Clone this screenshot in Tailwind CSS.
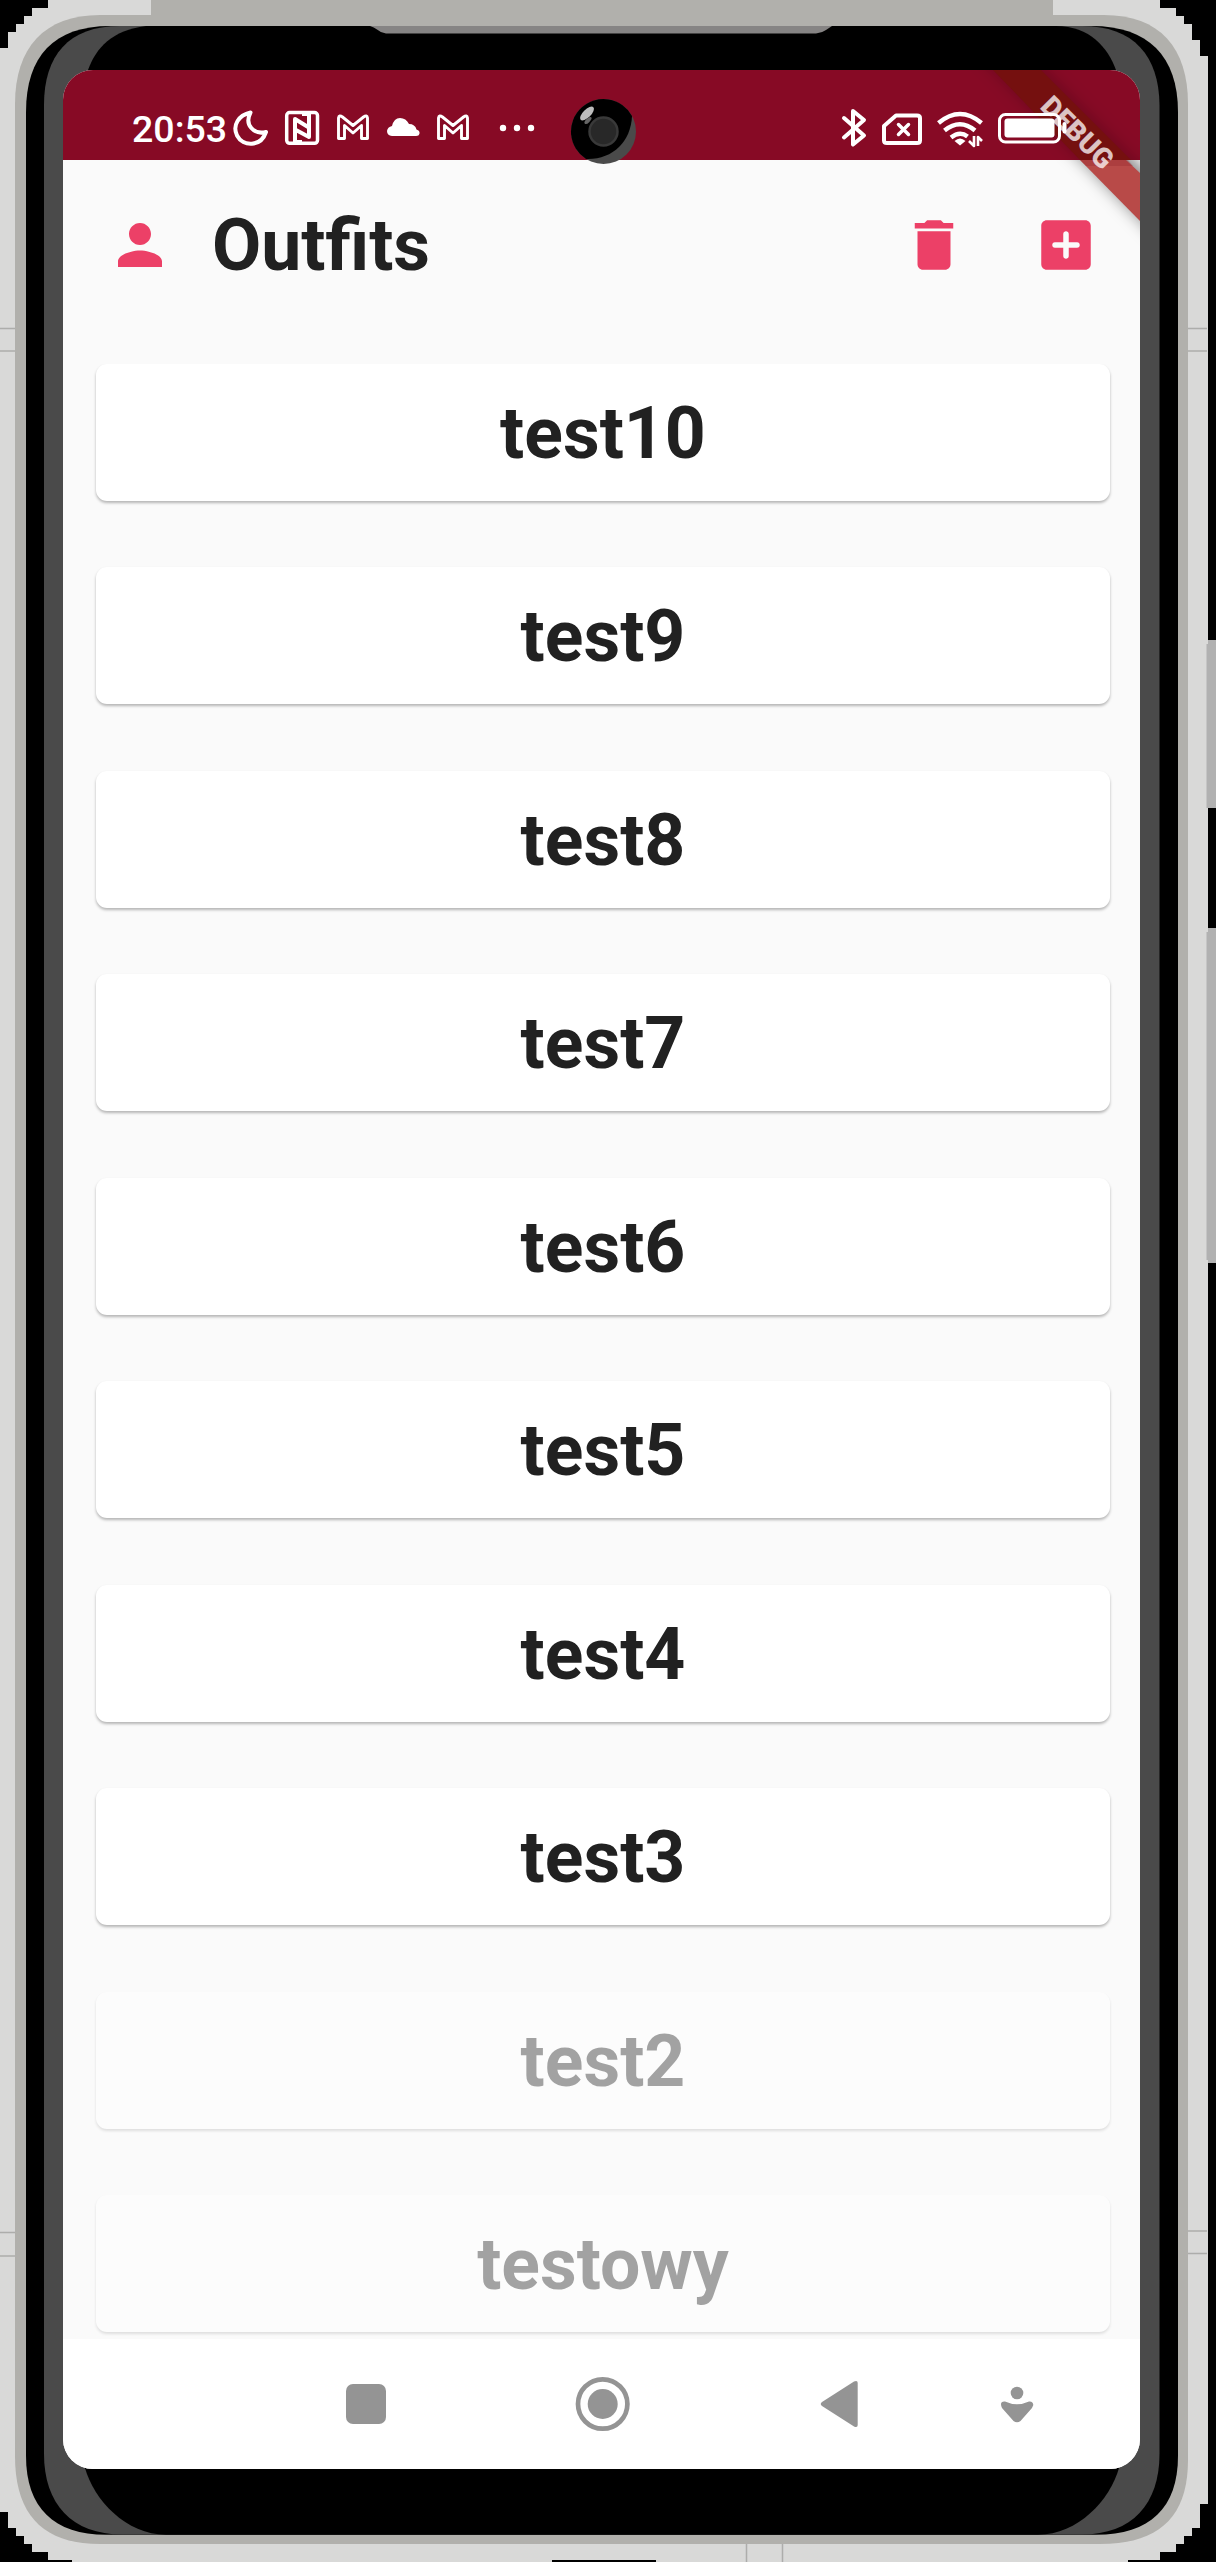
<!DOCTYPE html>
<html lang="en">
<head>
<meta charset="utf-8">
<title>Outfits</title>
<script src="https://cdn.jsdelivr.net/npm/@tailwindcss/browser@4"></script>
</head>
<body class="bg-black">
<div class="relative w-[1216px] h-[2562px] overflow-hidden bg-black pt-[70px] pl-[63px] font-['Roboto',sans-serif] text-[#212121]">
  <!-- phone body -->
  <svg class="absolute inset-0" width="1216" height="2562" viewBox="0 0 1216 2562">
    <path shape-rendering="crispEdges" fill="#d9d9d8" d="M48 0H1160V8H1176V16H1184V24H1192V40H1200V56H1208V2504H1200V2528H1192V2536H1184V2544H1176V2552H1160V2560H1128V2562H72V2560H48V2552H32V2544H24V2536H16V2528H8V2512H0V48H8V32H16V24H24V16H32V8H48Z"/>
    <path stroke="#adadab" stroke-width="1.5" d="M0 328.5H15M0 351H15M1188 328.5H1207M1188 351H1207M0 2232.5H15M0 2256H15M1188 2231H1207M1188 2253.5H1207M746.5 2544V2562M782.500 2544V2562"/>
    <path fill="#b1b0ac" d="M151 0H1053V26H151Z"/>
    <path fill="#b1b0ac" d="M100 15H1104C1160 15 1188 48 1188 104V2460C1188 2516 1160 2544 1100 2544H100C44 2544 15 2516 15 2456V104C15 48 44 15 100 15Z"/>
    <path fill="#000" d="M110 26H1092C1148 26 1178 56 1178 112V2456C1178 2508 1150 2534.700 1096 2534.700H106C54 2534.700 26 2508 26 2456V112C26 56 54 26 110 26Z"/>
    <path fill="#4a4a4a" d="M120 26H1082C1134 26 1159 56 1159.500 105V2454C1159.500 2504 1132 2534.500 1082 2534.500H122C72 2534.500 44 2504 44 2454V105C44 56 68 26 120 26Z"/>
    <path fill="#000" d="M146 26H1056C1090 26 1108 48 1116 70L1119 2468C1110 2500 1078 2534.700 1038 2534.700H166C126 2534.700 94 2500 85 2468L88 70C96 48 112 30 146 26Z"/>
    <path fill="#868484" d="M370 26H832L826 30Q822 33 816 33.500H386Q381 33 377 29.500Q374 27 370 26Z"/>
    <path fill="#b1b1b1" d="M1208 640H1216V808H1206.500V644H1208ZM1208 928H1216V1263H1208V1260H1206.500V932H1208Z"/>
    <path fill="#000" d="M552 2560H656V2562H552Z"/>
  </svg>

  <!-- screen -->
  <main class="relative flex h-[2399px] w-[1077px] flex-col overflow-hidden rounded-[30px] bg-[#fafafa]">
    <header class="flex h-[90px] shrink-0 items-start bg-[#870a25] pl-[69px] text-white">
      <span class="mt-[36px] w-[94px] text-[37.500px] leading-[46px] font-medium">20:53</span>
      <svg class="mt-[36px] shrink-0" width="330" height="48" viewBox="226 106 330 48" fill="none" stroke="#fff" stroke-width="3.500" stroke-linejoin="round" stroke-linecap="round">
        <path stroke-width="4" d="M250.500 112.500C239 115 232 125 237 135.500C243 147 261 147 266 132C254 135 244 125 250.500 112.500Z"/>
        <rect x="286.700" y="112.500" width="30.800" height="30.800" rx="3"/>
        <path stroke-width="4" stroke-linecap="butt" d="M295 143V119L308 127M309 113V137L296 130M302 114H309M295 142H302"/>
        <path stroke-width="2.900" d="M338.500 138.500V118Q339 114.500 342.500 117L353 125.500L363.500 117Q367 114.500 367.500 118V138.500H361.500V125.500L353 133L344.500 125.500V138.500Z"/>
        <path fill="#fff" stroke="none" d="M392 136Q387 135.500 387 131Q387.500 127 392 126Q394 118 400 118Q406 118 409 124Q415 124 416.500 129.500Q420 130.500 419.500 133.500Q419 136 416 136Z"/>
        <path stroke-width="2.900" d="M438.500 138.500V118Q439 114.500 442.500 117L453 125.500L463.500 117Q467 114.500 467.500 118V138.500H461.500V125.500L453 133L444.500 125.500V138.500Z"/>
        <g fill="#fff" stroke="none"><circle cx="503" cy="128" r="3.200"/><circle cx="517" cy="128" r="3.200"/><circle cx="531" cy="128" r="3.200"/></g>
      </svg>
      <svg class="relative z-20 mt-[36px] ml-[280px] shrink-0" width="236" height="48" viewBox="836 106 236 48" fill="none" stroke="#fff" stroke-width="4" stroke-linejoin="round" stroke-linecap="round">
        <path d="M844 118L864 135.500L853 144.500V111L864 120L844 137.500"/>
        <path d="M896 115.500H917Q920 115.500 920 118V140.500Q920 143 917 143H887Q884 143 884 140.500V126Z"/>
        <path stroke-width="3.500" d="M898.500 124.500L908.500 134.500M908.500 124.500L898.500 134.500"/>
        <g stroke-linecap="butt" stroke-width="4.500"><path d="M938.500 123Q960 105 981.500 123M944.500 130.500Q960 118 975 130.500M951 137.500Q960 130.500 967.500 136.500"/></g>
        <path fill="#fff" stroke="none" d="M954.500 141Q960 136 965.500 141L960 145.500Z"/>
        <path stroke-width="2.600" stroke-linecap="butt" d="M974 136V146L969 141M978 146V137L982 141"/>
        <rect x="999.500" y="114.500" width="60" height="27.500" rx="6" stroke-width="3"/>
        <rect x="1004.500" y="118.500" width="50" height="19" rx="3" fill="#fff" stroke="none"/>
        <path d="M1064.500 124V131.500"/>
      </svg>
    </header>

    <div class="flex h-[204px] shrink-0 items-start pt-[42px] pl-[44px]">
      <svg class="mt-[10px] shrink-0" width="66" height="66" viewBox="0 0 24 24" fill="#ec4067"><path d="M12 12c2.210 0 4-1.790 4-4s-1.790-4-4-4-4 1.790-4 4 1.790 4 4 4zm0 2c-2.670 0-8 1.340-8 4v2h16v-2c0-2.660-5.330-4-8-4z"/></svg>
      <h1 class="mt-px ml-[39px] w-[620px] text-[71.500px] leading-[86px] font-bold">Outfits</h1>
      <svg class="mt-[10px] ml-[69px] shrink-0" width="66" height="66" viewBox="0 0 24 24" fill="#ec4067"><path d="M6 19c0 1.100.9 2 2 2h8c1.100 0 2-.9 2-2V7H6v12zM19 4h-3.500l-1-1h-5l-1 1H5v2h14V4z"/></svg>
      <svg class="mt-[10px] ml-[66px] shrink-0" width="66" height="66" viewBox="0 0 24 24" fill="#ec4067"><path d="M19 3H5c-1.100 0-2 .9-2 2v14c0 1.100.9 2 2 2h14c1.100 0 2-.9 2-2V5c0-1.100-.9-2-2-2zm-3 10h-3v3c0 1.330-2 1.330-2 0v-3H8c-1.330 0-1.330-2 0-2h3V8c0-1.330 2-1.330 2 0v3h3c1.330 0 1.330 2 0 2z"/></svg>
    </div>

    <ul class="flex h-[1975px] shrink-0 flex-col gap-[66.440px] overflow-hidden pr-[30px] pl-[33px] text-center text-[71.500px] leading-[139px] font-bold">
      <li class="h-[137px] shrink-0 rounded-[11px] bg-white shadow-[0_2px_3px_rgba(0,0,0,0.28)]">test10</li>
      <li class="h-[137px] shrink-0 rounded-[11px] bg-white shadow-[0_2px_3px_rgba(0,0,0,0.28)]">test9</li>
      <li class="h-[137px] shrink-0 rounded-[11px] bg-white shadow-[0_2px_3px_rgba(0,0,0,0.28)]">test8</li>
      <li class="h-[137px] shrink-0 rounded-[11px] bg-white shadow-[0_2px_3px_rgba(0,0,0,0.28)]">test7</li>
      <li class="h-[137px] shrink-0 rounded-[11px] bg-white shadow-[0_2px_3px_rgba(0,0,0,0.28)]">test6</li>
      <li class="h-[137px] shrink-0 rounded-[11px] bg-white shadow-[0_2px_3px_rgba(0,0,0,0.28)]">test5</li>
      <li class="h-[137px] shrink-0 rounded-[11px] bg-white shadow-[0_2px_3px_rgba(0,0,0,0.28)]">test4</li>
      <li class="h-[137px] shrink-0 rounded-[11px] bg-white shadow-[0_2px_3px_rgba(0,0,0,0.28)]">test3</li>
      <li class="h-[137px] shrink-0 rounded-[11px] bg-white opacity-40 shadow-[0_2px_3px_rgba(0,0,0,0.28)]">test2</li>
      <li class="h-[137px] shrink-0 rounded-[11px] bg-white opacity-40 shadow-[0_2px_3px_rgba(0,0,0,0.28)]">testowy</li>
    </ul>

    <nav class="h-[130px] shrink-0 bg-white">
      <svg width="1077" height="130" viewBox="63 2339 1077 130" fill="#949494">
        <rect x="346" y="2384" width="40" height="40" rx="7"/>
        <circle cx="602.700" cy="2404" r="15"/>
        <circle cx="602.700" cy="2404" r="24.700" fill="none" stroke="#949494" stroke-width="4.700"/>
        <path d="M822 2402L854 2381.500Q857.700 2380 857.700 2383V2425Q857.700 2428 854 2426.500L822 2406Q819.500 2404 822 2402Z"/>
        <circle cx="1017" cy="2393" r="6.300"/>
        <path d="M1005 2401.500Q1017 2407 1029 2401.500Q1033 2401 1033.300 2405L1032 2408L1020.500 2421Q1017 2423.500 1013.500 2421L1002 2408Q999 2401 1005 2401.500Z"/>
      </svg>
    </nav>

    <!-- debug ribbon -->
    <svg class="absolute top-0 left-[837px] overflow-visible" width="240" height="200" viewBox="900 70 240 200">
      <defs>
        <filter id="soft" x="-20%" y="-20%" width="140%" height="140%"><feGaussianBlur stdDeviation="8"/></filter>
        <clipPath id="below"><path d="M880 160H1160V300H880Z"/></clipPath>
        <clipPath id="above"><path d="M880 40H1160V160H880Z"/></clipPath>
      </defs>
      <path filter="url(#soft)" clip-path="url(#above)" fill="#000" fill-opacity=".2" d="M960 36H1010L1170 196V250Z"/>
      <g clip-path="url(#below)"><path filter="url(#soft)" fill="#000" fill-opacity=".45" d="M960 36H1010L1170 196V250Z"/></g>
      <path fill="#75100f" d="M993 70H1041L1131 160H1080Z"/>
      <path fill="#b84a48" d="M1080 160H1126L1140 173V221Z"/>
      <path fill="#93252a" d="M1080 160H1128L1133 166H1086Z" fill-opacity=".3"/>
    </svg>
    <span class="absolute top-[46px] left-[964px] w-[100px] rotate-45 text-center text-[28px] leading-[34px] font-black text-white/75">DEBUG</span>
  </main>

  <!-- front camera -->
  <svg class="absolute top-[98px] left-[570px]" width="67" height="67" viewBox="570 98 67 67">
    <circle cx="603.500" cy="131.500" r="32.500" fill="#4a4a4a"/>
    <path fill="#000" d="M632 116C631 142 612 160 586 159A32.500 32.500 0 1 1 632 116Z"/>
    <circle cx="603.500" cy="131.500" r="14" fill="#282828" stroke="#393939" stroke-width="2.500"/>
    <ellipse cx="587" cy="113.500" rx="9" ry="4" transform="rotate(-45 587 113.500)" fill="#bdbdbd"/>
    <ellipse cx="588" cy="120.500" rx="4.500" ry="2" transform="rotate(-45 588 120.500)" fill="#666"/>
  </svg>
</div>
</body>
</html>
